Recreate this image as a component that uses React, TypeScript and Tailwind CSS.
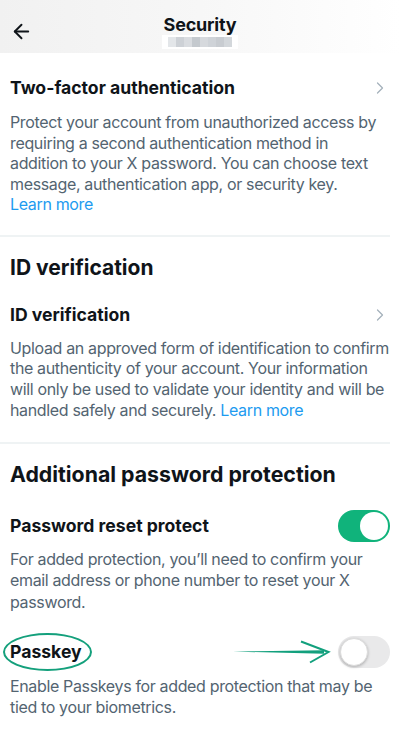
import { ArrowLeft, ChevronRight } from "lucide-react"

const font = { fontFamily: "Inter, 'Noto Sans', sans-serif" }

function Toggle({ on }: { on: boolean }) {
  return (
    <div
      className={`w-[52px] h-[32px] rounded-full p-[2px] flex shrink-0 ${
        on ? "bg-[#10b37b] justify-end" : "bg-[#e9e9ea] justify-start"
      }`}
    >
      <div
        className={`w-[28px] h-[28px] rounded-full bg-white ${
          on ? "" : "shadow-[0_1px_3px_rgba(0,0,0,0.25)] border border-[#dcdcdc]"
        }`}
      />
    </div>
  )
}

function Pixelated() {
  const shades = ["#e3e6e9", "#cdd1d6", "#d9dce0", "#c4c9ce", "#d6d9dd", "#cfd3d8", "#c8ccd1", "#d3d7db"]
  return (
    <div className="flex bg-white px-[6px] py-[2px]">
      {shades.map((c, i) => (
        <div key={i} className="w-[8px] h-[10px]" style={{ background: c }} />
      ))}
    </div>
  )
}

export default function App() {
  return (
    <div className="w-[400px] min-h-[731px] bg-white text-[#0f1419] overflow-hidden" style={font}>
      {/* HEADER */}
      <div className="h-[53px] bg-gradient-to-r from-[#f1f1f1] via-[#f7f7f7] to-white grid grid-cols-[1fr_auto_1fr] items-start">
        <div className="pl-[10px] pt-[20px]">
          <ArrowLeft size={23} strokeWidth={2} />
        </div>
        <div className="flex flex-col items-center pt-[15px]">
          <div className="text-[18px] font-bold leading-[20px] tracking-[-0.2px]">Security</div>
          <Pixelated />
        </div>
        <div />
      </div>

      <div className="pl-[10px] w-[390px]">
        {/* TWO FACTOR */}
        <div className="mt-[24px] flex items-center justify-between">
          <div className="text-[17.6px] font-bold leading-[22px]">Two-factor authentication</div>
          <ChevronRight size={20} className="text-[#a4b1bb]" strokeWidth={1.5} />
        </div>
        <p className="mt-[13px] w-[372px] text-[16px] leading-[20.5px] text-[#536471] tracking-[-0.35px]">
          Protect your account from unauthorized access by requiring a second authentication method in
          addition to your X password. You can choose text message, authentication app, or security key.
        </p>
        <p className="text-[16px] leading-[20.5px] text-[#1d9bf0] tracking-[-0.35px]">Learn more</p>
      </div>

      <div className="mt-[20px] w-[390px] h-[2px] bg-[#eff3f4]" />

      <div className="pl-[10px] w-[390px]">
        {/* ID VERIFICATION */}
        <div className="mt-[18px] text-[21px] font-bold leading-[26px]">ID verification</div>
        <div className="mt-[23px] flex items-center justify-between">
          <div className="text-[17.6px] font-bold leading-[22px]">ID verification</div>
          <ChevronRight size={20} className="text-[#a4b1bb]" strokeWidth={1.5} />
        </div>
        <p className="mt-[12px] text-[16px] leading-[20.8px] text-[#536471] tracking-[-0.35px]">
          Upload an approved form of identification to confirm the authenticity of your account. Your information
          will only be used to validate your identity and will be handled safely and securely.{" "}
          <a className="text-[#1d9bf0]">Learn more</a>
        </p>
      </div>

      <div className="mt-[21px] w-[390px] h-[2px] bg-[#eff3f4]" />

      <div className="pl-[10px] w-[390px]">
        {/* ADDITIONAL PASSWORD PROTECTION */}
        <div className="mt-[17px] text-[21.3px] font-bold leading-[26px]">Additional password protection</div>

        <div className="mt-[23px] flex items-center justify-between">
          <div className="text-[17.6px] font-bold leading-[22px]">Password reset protect</div>
          <Toggle on />
        </div>
        <p className="mt-[7px] text-[16px] leading-[21.5px] text-[#536471] tracking-[-0.35px]">
          For added protection, you’ll need to confirm your email address or phone number to reset your X password.
        </p>

        {/* PASSKEY */}
        <div className="relative mt-[23px] flex items-center justify-between">
          <div className="text-[17.6px] font-bold leading-[22px]">Passkey</div>
          <Toggle on={false} />
          {/* annotation ellipse */}
          <div className="absolute left-[-7px] top-[-3px] w-[89px] h-[38px] rounded-[50%] border-2 border-[#14a07c]" />
          {/* annotation arrow */}
          <svg className="absolute left-[222px] top-[2px]" width="100" height="28" viewBox="0 0 100 28">
            <path d="M1 13.6 L92 12.3 L92 15.7 Z" fill="#12a07d" />
            <path d="M69 3.5 L96.5 14 L78 24.5" fill="none" stroke="#12a07d" strokeWidth="2" strokeLinejoin="miter" />
          </svg>
        </div>
        <p className="mt-[8px] text-[16px] leading-[20.5px] text-[#536471] tracking-[-0.35px]">
          Enable Passkeys for added protection that may be tied to your biometrics.
        </p>
      </div>
    </div>
  )
}
